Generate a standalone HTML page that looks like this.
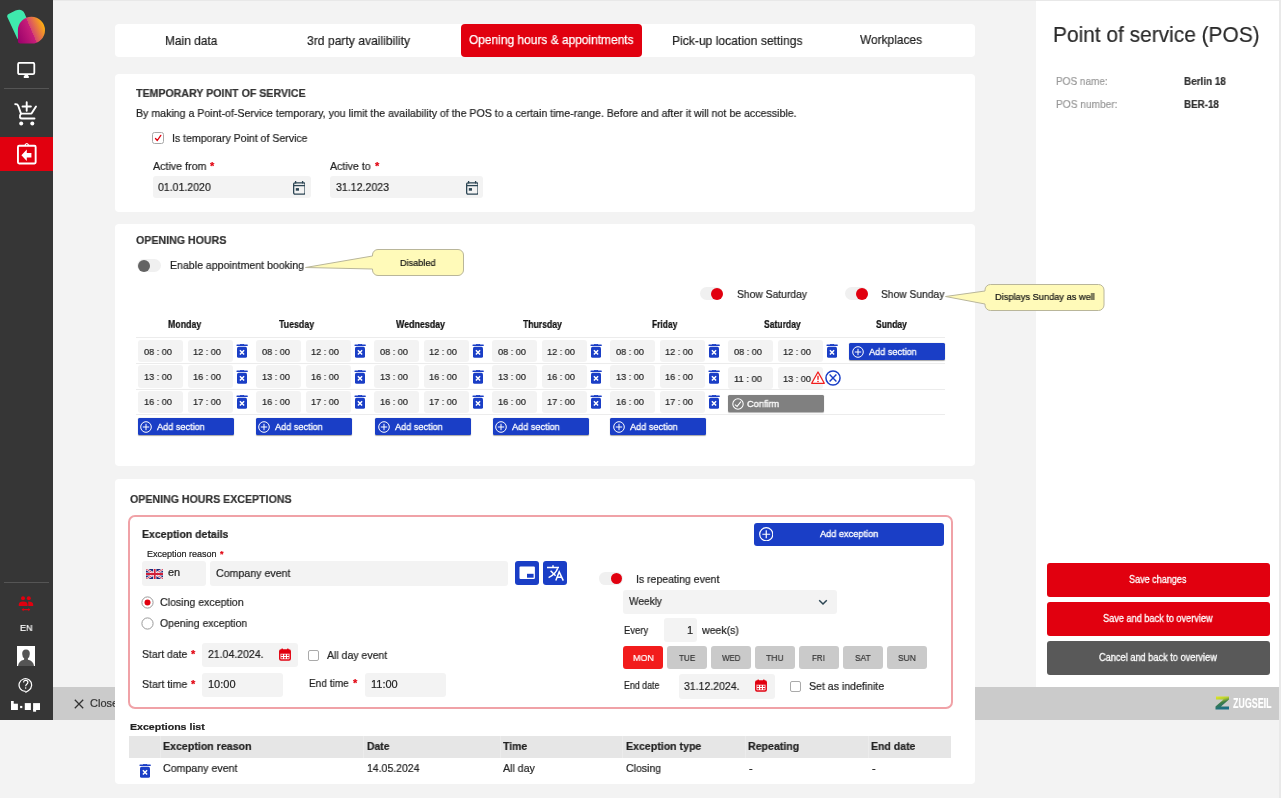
<!DOCTYPE html>
<html><head><meta charset="utf-8"><style>
html,body{margin:0;padding:0;width:1281px;height:798px;overflow:hidden;background:#f3f3f3;}
body{position:relative;font-family:"Liberation Sans",sans-serif;}
.t{position:absolute;white-space:nowrap;line-height:1;will-change:transform;-webkit-text-stroke:0.2px currentColor;}
.r{position:absolute;display:block;}
</style></head><body>
<div class="r" style="left:0px;top:0px;width:1281px;height:798px;background:#f3f3f3;border-radius:0px;"></div>
<div class="r" style="left:53px;top:0px;width:1228px;height:1px;background:#e8e8e8;border-radius:0px;"></div>
<div class="r" style="left:0px;top:0px;width:53px;height:720px;background:#363636;border-radius:0px;"></div>
<div class="r" style="left:0px;top:137px;width:53px;height:34px;background:#e1000f;border-radius:0px;"></div>
<div class="r" style="left:4px;top:88px;width:45px;height:1px;background:#555;border-radius:0px;"></div>
<div class="r" style="left:4px;top:582px;width:45px;height:1px;background:#555;border-radius:0px;"></div>
<div class="r" style="left:53px;top:687px;width:1228px;height:33px;background:#cbcbcb;border-radius:0px;"></div>
<svg class="r" style="left:73.7px;top:698.7px;" width="10" height="10" viewBox="0 0 10 10"><path d="M0.8 0.8 L9.2 9.2 M9.2 0.8 L0.8 9.2" stroke="#333" stroke-width="1.3"/></svg>
<div class="t" style="left:90.30px;top:698.00px;font-size:11px;color:#333;">Close</div>
<svg class="r" style="left:1215px;top:696px;" width="15" height="14" viewBox="0 0 15 14"><defs><linearGradient id="zg" x1="0" y1="0" x2="0.3" y2="1"><stop offset="0" stop-color="#e6ea22"/><stop offset="0.3" stop-color="#b8d030"/><stop offset="0.55" stop-color="#3f7d46"/><stop offset="1" stop-color="#1a6e84"/></linearGradient></defs><path d="M1 0.5 H14 V3.5 L6 10.5 H14 V13.5 H0.5 V10.5 L8.5 3.5 H1 Z" fill="url(#zg)"/></svg>
<div class="t" style="left:1233.00px;top:696.00px;font-size:14px;color:#fff;font-weight:bold;transform:scaleX(0.6359);transform-origin:0.00px 0;">ZUGSEIL</div>
<div class="r" style="left:1036px;top:1px;width:243px;height:686px;background:#ffffff;border-radius:0px;"></div>
<div class="r" style="left:1279px;top:0px;width:2px;height:798px;background:#e9e9e9;border-radius:0px;"></div>
<div class="r" style="left:115px;top:24px;width:860px;height:33px;background:#fff;border-radius:4px;"></div>
<div class="r" style="left:115px;top:74px;width:860px;height:138px;background:#fff;border-radius:4px;"></div>
<div class="r" style="left:115px;top:224px;width:860px;height:242px;background:#fff;border-radius:4px;"></div>
<div class="r" style="left:115px;top:479px;width:860px;height:305px;background:#fff;border-radius:4px;"></div>
<div class="r" style="left:461px;top:24px;width:181px;height:33px;background:#e1000f;border-radius:4px;"></div>
<div class="t" style="left:165.00px;top:34.00px;font-size:13px;color:#222;transform:scaleX(0.9178);transform-origin:0.00px 0;">Main data</div>
<div class="t" style="left:306.50px;top:34.00px;font-size:13px;color:#222;transform:scaleX(0.9321);transform-origin:0.00px 0;">3rd party availibility</div>
<div class="t" style="left:468.50px;top:33.00px;font-size:13px;color:#fff;transform:scaleX(0.9180);transform-origin:0.00px 0;-webkit-text-stroke:0.25px #fff;">Opening hours &amp; appointments</div>
<div class="t" style="left:672.00px;top:34.00px;font-size:13px;color:#222;transform:scaleX(0.9308);transform-origin:0.00px 0;">Pick-up location settings</div>
<div class="t" style="left:859.70px;top:33.00px;font-size:13px;color:#222;transform:scaleX(0.9158);transform-origin:0.00px 0;">Workplaces</div>
<div class="t" style="left:136.40px;top:88.00px;font-size:11px;color:#333;font-weight:bold;transform:scaleX(0.9647);transform-origin:0.00px 0;">TEMPORARY POINT OF SERVICE</div>
<div class="t" style="left:136.40px;top:108.00px;font-size:11px;color:#222;transform:scaleX(0.9641);transform-origin:0.00px 0;">By making a Point-of-Service temporary, you limit the availability of the POS to a certain time-range. Before and after it will not be accessible.</div>
<div class="r" style="left:152px;top:132px;width:12px;height:12px;background:#fff;border-radius:2.5px;border:1px solid #a8a8a8;box-sizing:border-box;"></div>
<svg class="r" style="left:152px;top:132px;" width="12" height="12" viewBox="0 0 12 12"><path d="M3.5 6.5 L5.3 8.5 L8.8 3.4" fill="none" stroke="#e1000f" stroke-width="1.3" stroke-linecap="round" stroke-linejoin="round"/></svg>
<div class="t" style="left:171.50px;top:133.00px;font-size:11px;color:#222;transform:scaleX(0.9596);transform-origin:0.00px 0;">Is temporary Point of Service</div>
<div class="t" style="left:153.20px;top:161.00px;font-size:11px;color:#222;transform:scaleX(0.9727);transform-origin:0.00px 0;">Active from</div>
<div class="t" style="left:210.30px;top:161.00px;font-size:11px;color:#e1000f;font-weight:bold;">*</div>
<div class="r" style="left:153px;top:176px;width:158px;height:22px;background:#f3f3f3;border-radius:3px;"></div>
<div class="t" style="left:158.30px;top:182.00px;font-size:11px;color:#222;transform:scaleX(0.9583);transform-origin:0.00px 0;">01.01.2020</div>
<div class="t" style="left:330.30px;top:161.00px;font-size:11px;color:#222;transform:scaleX(0.9645);transform-origin:0.00px 0;">Active to</div>
<div class="t" style="left:374.70px;top:161.00px;font-size:11px;color:#e1000f;font-weight:bold;">*</div>
<div class="r" style="left:330px;top:176px;width:153px;height:22px;background:#f3f3f3;border-radius:3px;"></div>
<div class="t" style="left:335.60px;top:182.00px;font-size:11px;color:#222;transform:scaleX(0.9637);transform-origin:0.00px 0;">31.12.2023</div>
<svg class="r" style="left:293px;top:181px;" width="12" height="14" viewBox="0 0 12 14"><rect x="0.65" y="1.95" width="11.4" height="11.2" rx="1.3" fill="none" stroke="#2d4654" stroke-width="1.3"/><path d="M0.65 4.6 H12.05" stroke="#2d4654" stroke-width="1.3"/><path d="M2.6 0 V2.6 M9.6 0 V2.6" stroke="#2d4654" stroke-width="1.3"/><rect x="2.8" y="7.1" width="3.2" height="2.6" fill="#2d4654"/></svg>
<svg class="r" style="left:466px;top:181px;" width="12" height="14" viewBox="0 0 12 14"><rect x="0.65" y="1.95" width="11.4" height="11.2" rx="1.3" fill="none" stroke="#2d4654" stroke-width="1.3"/><path d="M0.65 4.6 H12.05" stroke="#2d4654" stroke-width="1.3"/><path d="M2.6 0 V2.6 M9.6 0 V2.6" stroke="#2d4654" stroke-width="1.3"/><rect x="2.8" y="7.1" width="3.2" height="2.6" fill="#2d4654"/></svg>
<div class="t" style="left:136.30px;top:235.00px;font-size:11px;color:#333;font-weight:bold;transform:scaleX(0.9658);transform-origin:0.00px 0;">OPENING HOURS</div>
<div class="r" style="left:137px;top:259px;width:24px;height:13px;background:#f0f0f0;border-radius:6.5px;"></div>
<div class="r" style="left:137.5px;top:259.5px;width:12.5px;height:12.5px;background:#636363;border-radius:6.25px;"></div>
<div class="t" style="left:169.80px;top:260.00px;font-size:11px;color:#222;transform:scaleX(0.9613);transform-origin:0.00px 0;">Enable appointment booking</div>
<svg class="r" style="left:304.5px;top:249px;" width="160.0" height="28" viewBox="0 0 160.0 28"><path d="M73.0 0.5 H153.0 A5.5 5.5 0 0 1 158.5 6 V21 A5.5 5.5 0 0 1 153.0 26.5 H73.0 A5.5 5.5 0 0 1 67.5 21 V20 L0.5 18.5 L67.5 7 V6 A5.5 5.5 0 0 1 73.0 0.5 Z" fill="#fffab9" stroke="#b9b69a" stroke-width="1"/></svg>
<div class="t" style="left:399.50px;top:258.00px;font-size:9.5px;color:#111;transform:scaleX(0.9595);transform-origin:0.00px 0;">Disabled</div>
<div class="r" style="left:700px;top:287px;width:23px;height:13px;background:#f0f0f0;border-radius:6.5px;"></div>
<div class="r" style="left:711px;top:288px;width:12px;height:12px;background:#e1000f;border-radius:6px;"></div>
<div class="t" style="left:736.60px;top:289.00px;font-size:11px;color:#222;transform:scaleX(0.9383);transform-origin:0.00px 0;">Show Saturday</div>
<div class="r" style="left:845px;top:287px;width:23px;height:13px;background:#f0f0f0;border-radius:6.5px;"></div>
<div class="r" style="left:856px;top:288px;width:12px;height:12px;background:#e1000f;border-radius:6px;"></div>
<div class="t" style="left:881.30px;top:289.00px;font-size:11px;color:#222;transform:scaleX(0.9323);transform-origin:0.00px 0;">Show Sunday</div>
<svg class="r" style="left:945px;top:283.5px;" width="160.5" height="28" viewBox="0 0 160.5 28"><path d="M45.5 0.5 H153.5 A5.5 5.5 0 0 1 159.0 6 V21 A5.5 5.5 0 0 1 153.5 26.5 H45.5 A5.5 5.5 0 0 1 40.0 21 V20.0 L0.5 12.5 L40.0 7.0 V6 A5.5 5.5 0 0 1 45.5 0.5 Z" fill="#fffab9" stroke="#b9b69a" stroke-width="1"/></svg>
<div class="t" style="left:994.80px;top:292.00px;font-size:9.5px;color:#111;transform:scaleX(0.9746);transform-origin:0.00px 0;">Displays Sunday as well</div>
<div class="t" style="left:168.40px;top:320.00px;font-size:10px;color:#111;font-weight:bold;transform:scaleX(0.8783);transform-origin:0.00px 0;">Monday</div>
<div class="t" style="left:279.30px;top:320.00px;font-size:10px;color:#111;font-weight:bold;transform:scaleX(0.8822);transform-origin:0.00px 0;">Tuesday</div>
<div class="t" style="left:396.00px;top:320.00px;font-size:10px;color:#111;font-weight:bold;transform:scaleX(0.8845);transform-origin:0.00px 0;">Wednesday</div>
<div class="t" style="left:522.50px;top:320.00px;font-size:10px;color:#111;font-weight:bold;transform:scaleX(0.8622);transform-origin:0.00px 0;">Thursday</div>
<div class="t" style="left:651.50px;top:320.00px;font-size:10px;color:#111;font-weight:bold;transform:scaleX(0.8433);transform-origin:0.00px 0;">Friday</div>
<div class="t" style="left:764.40px;top:320.00px;font-size:10px;color:#111;font-weight:bold;transform:scaleX(0.8575);transform-origin:0.00px 0;">Saturday</div>
<div class="t" style="left:876.40px;top:320.00px;font-size:10px;color:#111;font-weight:bold;transform:scaleX(0.8536);transform-origin:0.00px 0;">Sunday</div>
<div class="r" style="left:136px;top:337px;width:809px;height:1px;background:#ececec;border-radius:0px;"></div>
<div class="r" style="left:136px;top:363px;width:809px;height:1px;background:#ececec;border-radius:0px;"></div>
<div class="r" style="left:136px;top:389px;width:809px;height:1px;background:#ececec;border-radius:0px;"></div>
<div class="r" style="left:136px;top:414px;width:809px;height:1px;background:#ececec;border-radius:0px;"></div>
<div class="r" style="left:138px;top:339.6px;width:45px;height:22.3px;background:#f3f3f3;border-radius:3px;"></div>
<div class="r" style="left:187.5px;top:339.6px;width:45px;height:22.3px;background:#f3f3f3;border-radius:3px;"></div>
<div class="t" style="left:143.70px;top:347.00px;font-size:9.5px;color:#222;transform:scaleX(0.9621);transform-origin:0.00px 0;">08 : 00</div>
<div class="t" style="left:193.20px;top:347.00px;font-size:9.5px;color:#222;transform:scaleX(0.9621);transform-origin:0.00px 0;">12 : 00</div>
<svg class="r" style="left:236px;top:344.1px;" width="12" height="15" viewBox="0 0 12 15"><path d="M1.1 1.3 H11.2" stroke="#1a3ec6" stroke-width="1.4" stroke-linecap="round"/><path d="M4.1 0.5 Q6.1 -0.3 8.1 0.5" stroke="#1a3ec6" stroke-width="1.1" fill="none"/><rect x="1.0" y="2.8" width="10" height="11" rx="1.6" fill="#1a3ec6"/><path d="M3.9 6.3 L8.1 10.6 M8.1 6.3 L3.9 10.6" stroke="#fff" stroke-width="1.5"/></svg>
<div class="r" style="left:138px;top:365.3px;width:45px;height:22.3px;background:#f3f3f3;border-radius:3px;"></div>
<div class="r" style="left:187.5px;top:365.3px;width:45px;height:22.3px;background:#f3f3f3;border-radius:3px;"></div>
<div class="t" style="left:143.70px;top:372.00px;font-size:9.5px;color:#222;transform:scaleX(0.9621);transform-origin:0.00px 0;">13 : 00</div>
<div class="t" style="left:193.20px;top:372.00px;font-size:9.5px;color:#222;transform:scaleX(0.9621);transform-origin:0.00px 0;">16 : 00</div>
<svg class="r" style="left:236px;top:369.8px;" width="12" height="15" viewBox="0 0 12 15"><path d="M1.1 1.3 H11.2" stroke="#1a3ec6" stroke-width="1.4" stroke-linecap="round"/><path d="M4.1 0.5 Q6.1 -0.3 8.1 0.5" stroke="#1a3ec6" stroke-width="1.1" fill="none"/><rect x="1.0" y="2.8" width="10" height="11" rx="1.6" fill="#1a3ec6"/><path d="M3.9 6.3 L8.1 10.6 M8.1 6.3 L3.9 10.6" stroke="#fff" stroke-width="1.5"/></svg>
<div class="r" style="left:138px;top:390.6px;width:45px;height:22.3px;background:#f3f3f3;border-radius:3px;"></div>
<div class="r" style="left:187.5px;top:390.6px;width:45px;height:22.3px;background:#f3f3f3;border-radius:3px;"></div>
<div class="t" style="left:143.70px;top:397.00px;font-size:9.5px;color:#222;transform:scaleX(0.9621);transform-origin:0.00px 0;">16 : 00</div>
<div class="t" style="left:193.20px;top:397.00px;font-size:9.5px;color:#222;transform:scaleX(0.9621);transform-origin:0.00px 0;">17 : 00</div>
<svg class="r" style="left:236px;top:395.1px;" width="12" height="15" viewBox="0 0 12 15"><path d="M1.1 1.3 H11.2" stroke="#1a3ec6" stroke-width="1.4" stroke-linecap="round"/><path d="M4.1 0.5 Q6.1 -0.3 8.1 0.5" stroke="#1a3ec6" stroke-width="1.1" fill="none"/><rect x="1.0" y="2.8" width="10" height="11" rx="1.6" fill="#1a3ec6"/><path d="M3.9 6.3 L8.1 10.6 M8.1 6.3 L3.9 10.6" stroke="#fff" stroke-width="1.5"/></svg>
<div class="r" style="left:138px;top:418.3px;width:96px;height:16.5px;background:#1a3ec6;border-radius:1.5px;box-shadow:0 0.5px 1px rgba(0,0,0,.35);"></div>
<svg class="r" style="left:140.2px;top:420.6px;" width="12" height="12" viewBox="0 0 12 12"><circle cx="6.0" cy="6.0" r="5.3" fill="none" stroke="#fff" stroke-width="1.0"/><path d="M6.0 2.81 V9.190000000000001 M2.81 6.0 H9.190000000000001" stroke="#fff" stroke-width="1.0"/></svg>
<div class="t" style="left:157.20px;top:422.00px;font-size:9.5px;color:#fff;transform:scaleX(0.9637);transform-origin:0.00px 0;-webkit-text-stroke:0.3px #fff;">Add section</div>
<div class="r" style="left:256px;top:339.6px;width:45px;height:22.3px;background:#f3f3f3;border-radius:3px;"></div>
<div class="r" style="left:305.5px;top:339.6px;width:45px;height:22.3px;background:#f3f3f3;border-radius:3px;"></div>
<div class="t" style="left:261.70px;top:347.00px;font-size:9.5px;color:#222;transform:scaleX(0.9621);transform-origin:0.00px 0;">08 : 00</div>
<div class="t" style="left:311.20px;top:347.00px;font-size:9.5px;color:#222;transform:scaleX(0.9621);transform-origin:0.00px 0;">12 : 00</div>
<svg class="r" style="left:354px;top:344.1px;" width="12" height="15" viewBox="0 0 12 15"><path d="M1.1 1.3 H11.2" stroke="#1a3ec6" stroke-width="1.4" stroke-linecap="round"/><path d="M4.1 0.5 Q6.1 -0.3 8.1 0.5" stroke="#1a3ec6" stroke-width="1.1" fill="none"/><rect x="1.0" y="2.8" width="10" height="11" rx="1.6" fill="#1a3ec6"/><path d="M3.9 6.3 L8.1 10.6 M8.1 6.3 L3.9 10.6" stroke="#fff" stroke-width="1.5"/></svg>
<div class="r" style="left:256px;top:365.3px;width:45px;height:22.3px;background:#f3f3f3;border-radius:3px;"></div>
<div class="r" style="left:305.5px;top:365.3px;width:45px;height:22.3px;background:#f3f3f3;border-radius:3px;"></div>
<div class="t" style="left:261.70px;top:372.00px;font-size:9.5px;color:#222;transform:scaleX(0.9621);transform-origin:0.00px 0;">13 : 00</div>
<div class="t" style="left:311.20px;top:372.00px;font-size:9.5px;color:#222;transform:scaleX(0.9621);transform-origin:0.00px 0;">16 : 00</div>
<svg class="r" style="left:354px;top:369.8px;" width="12" height="15" viewBox="0 0 12 15"><path d="M1.1 1.3 H11.2" stroke="#1a3ec6" stroke-width="1.4" stroke-linecap="round"/><path d="M4.1 0.5 Q6.1 -0.3 8.1 0.5" stroke="#1a3ec6" stroke-width="1.1" fill="none"/><rect x="1.0" y="2.8" width="10" height="11" rx="1.6" fill="#1a3ec6"/><path d="M3.9 6.3 L8.1 10.6 M8.1 6.3 L3.9 10.6" stroke="#fff" stroke-width="1.5"/></svg>
<div class="r" style="left:256px;top:390.6px;width:45px;height:22.3px;background:#f3f3f3;border-radius:3px;"></div>
<div class="r" style="left:305.5px;top:390.6px;width:45px;height:22.3px;background:#f3f3f3;border-radius:3px;"></div>
<div class="t" style="left:261.70px;top:397.00px;font-size:9.5px;color:#222;transform:scaleX(0.9621);transform-origin:0.00px 0;">16 : 00</div>
<div class="t" style="left:311.20px;top:397.00px;font-size:9.5px;color:#222;transform:scaleX(0.9621);transform-origin:0.00px 0;">17 : 00</div>
<svg class="r" style="left:354px;top:395.1px;" width="12" height="15" viewBox="0 0 12 15"><path d="M1.1 1.3 H11.2" stroke="#1a3ec6" stroke-width="1.4" stroke-linecap="round"/><path d="M4.1 0.5 Q6.1 -0.3 8.1 0.5" stroke="#1a3ec6" stroke-width="1.1" fill="none"/><rect x="1.0" y="2.8" width="10" height="11" rx="1.6" fill="#1a3ec6"/><path d="M3.9 6.3 L8.1 10.6 M8.1 6.3 L3.9 10.6" stroke="#fff" stroke-width="1.5"/></svg>
<div class="r" style="left:256px;top:418.3px;width:96px;height:16.5px;background:#1a3ec6;border-radius:1.5px;box-shadow:0 0.5px 1px rgba(0,0,0,.35);"></div>
<svg class="r" style="left:258.2px;top:420.6px;" width="12" height="12" viewBox="0 0 12 12"><circle cx="6.0" cy="6.0" r="5.3" fill="none" stroke="#fff" stroke-width="1.0"/><path d="M6.0 2.81 V9.190000000000001 M2.81 6.0 H9.190000000000001" stroke="#fff" stroke-width="1.0"/></svg>
<div class="t" style="left:275.20px;top:422.00px;font-size:9.5px;color:#fff;transform:scaleX(0.9637);transform-origin:0.00px 0;-webkit-text-stroke:0.3px #fff;">Add section</div>
<div class="r" style="left:374px;top:339.6px;width:45px;height:22.3px;background:#f3f3f3;border-radius:3px;"></div>
<div class="r" style="left:423.5px;top:339.6px;width:45px;height:22.3px;background:#f3f3f3;border-radius:3px;"></div>
<div class="t" style="left:379.70px;top:347.00px;font-size:9.5px;color:#222;transform:scaleX(0.9621);transform-origin:0.00px 0;">08 : 00</div>
<div class="t" style="left:429.20px;top:347.00px;font-size:9.5px;color:#222;transform:scaleX(0.9621);transform-origin:0.00px 0;">12 : 00</div>
<svg class="r" style="left:472px;top:344.1px;" width="12" height="15" viewBox="0 0 12 15"><path d="M1.1 1.3 H11.2" stroke="#1a3ec6" stroke-width="1.4" stroke-linecap="round"/><path d="M4.1 0.5 Q6.1 -0.3 8.1 0.5" stroke="#1a3ec6" stroke-width="1.1" fill="none"/><rect x="1.0" y="2.8" width="10" height="11" rx="1.6" fill="#1a3ec6"/><path d="M3.9 6.3 L8.1 10.6 M8.1 6.3 L3.9 10.6" stroke="#fff" stroke-width="1.5"/></svg>
<div class="r" style="left:374px;top:365.3px;width:45px;height:22.3px;background:#f3f3f3;border-radius:3px;"></div>
<div class="r" style="left:423.5px;top:365.3px;width:45px;height:22.3px;background:#f3f3f3;border-radius:3px;"></div>
<div class="t" style="left:379.70px;top:372.00px;font-size:9.5px;color:#222;transform:scaleX(0.9621);transform-origin:0.00px 0;">13 : 00</div>
<div class="t" style="left:429.20px;top:372.00px;font-size:9.5px;color:#222;transform:scaleX(0.9621);transform-origin:0.00px 0;">16 : 00</div>
<svg class="r" style="left:472px;top:369.8px;" width="12" height="15" viewBox="0 0 12 15"><path d="M1.1 1.3 H11.2" stroke="#1a3ec6" stroke-width="1.4" stroke-linecap="round"/><path d="M4.1 0.5 Q6.1 -0.3 8.1 0.5" stroke="#1a3ec6" stroke-width="1.1" fill="none"/><rect x="1.0" y="2.8" width="10" height="11" rx="1.6" fill="#1a3ec6"/><path d="M3.9 6.3 L8.1 10.6 M8.1 6.3 L3.9 10.6" stroke="#fff" stroke-width="1.5"/></svg>
<div class="r" style="left:374px;top:390.6px;width:45px;height:22.3px;background:#f3f3f3;border-radius:3px;"></div>
<div class="r" style="left:423.5px;top:390.6px;width:45px;height:22.3px;background:#f3f3f3;border-radius:3px;"></div>
<div class="t" style="left:379.70px;top:397.00px;font-size:9.5px;color:#222;transform:scaleX(0.9621);transform-origin:0.00px 0;">16 : 00</div>
<div class="t" style="left:429.20px;top:397.00px;font-size:9.5px;color:#222;transform:scaleX(0.9621);transform-origin:0.00px 0;">17 : 00</div>
<svg class="r" style="left:472px;top:395.1px;" width="12" height="15" viewBox="0 0 12 15"><path d="M1.1 1.3 H11.2" stroke="#1a3ec6" stroke-width="1.4" stroke-linecap="round"/><path d="M4.1 0.5 Q6.1 -0.3 8.1 0.5" stroke="#1a3ec6" stroke-width="1.1" fill="none"/><rect x="1.0" y="2.8" width="10" height="11" rx="1.6" fill="#1a3ec6"/><path d="M3.9 6.3 L8.1 10.6 M8.1 6.3 L3.9 10.6" stroke="#fff" stroke-width="1.5"/></svg>
<div class="r" style="left:375.4px;top:418.3px;width:96px;height:16.5px;background:#1a3ec6;border-radius:1.5px;box-shadow:0 0.5px 1px rgba(0,0,0,.35);"></div>
<svg class="r" style="left:377.59999999999997px;top:420.6px;" width="12" height="12" viewBox="0 0 12 12"><circle cx="6.0" cy="6.0" r="5.3" fill="none" stroke="#fff" stroke-width="1.0"/><path d="M6.0 2.81 V9.190000000000001 M2.81 6.0 H9.190000000000001" stroke="#fff" stroke-width="1.0"/></svg>
<div class="t" style="left:394.60px;top:422.00px;font-size:9.5px;color:#fff;transform:scaleX(0.9637);transform-origin:0.00px 0;-webkit-text-stroke:0.3px #fff;">Add section</div>
<div class="r" style="left:492px;top:339.6px;width:45px;height:22.3px;background:#f3f3f3;border-radius:3px;"></div>
<div class="r" style="left:541.5px;top:339.6px;width:45px;height:22.3px;background:#f3f3f3;border-radius:3px;"></div>
<div class="t" style="left:497.70px;top:347.00px;font-size:9.5px;color:#222;transform:scaleX(0.9621);transform-origin:0.00px 0;">08 : 00</div>
<div class="t" style="left:547.20px;top:347.00px;font-size:9.5px;color:#222;transform:scaleX(0.9621);transform-origin:0.00px 0;">12 : 00</div>
<svg class="r" style="left:590px;top:344.1px;" width="12" height="15" viewBox="0 0 12 15"><path d="M1.1 1.3 H11.2" stroke="#1a3ec6" stroke-width="1.4" stroke-linecap="round"/><path d="M4.1 0.5 Q6.1 -0.3 8.1 0.5" stroke="#1a3ec6" stroke-width="1.1" fill="none"/><rect x="1.0" y="2.8" width="10" height="11" rx="1.6" fill="#1a3ec6"/><path d="M3.9 6.3 L8.1 10.6 M8.1 6.3 L3.9 10.6" stroke="#fff" stroke-width="1.5"/></svg>
<div class="r" style="left:492px;top:365.3px;width:45px;height:22.3px;background:#f3f3f3;border-radius:3px;"></div>
<div class="r" style="left:541.5px;top:365.3px;width:45px;height:22.3px;background:#f3f3f3;border-radius:3px;"></div>
<div class="t" style="left:497.70px;top:372.00px;font-size:9.5px;color:#222;transform:scaleX(0.9621);transform-origin:0.00px 0;">13 : 00</div>
<div class="t" style="left:547.20px;top:372.00px;font-size:9.5px;color:#222;transform:scaleX(0.9621);transform-origin:0.00px 0;">16 : 00</div>
<svg class="r" style="left:590px;top:369.8px;" width="12" height="15" viewBox="0 0 12 15"><path d="M1.1 1.3 H11.2" stroke="#1a3ec6" stroke-width="1.4" stroke-linecap="round"/><path d="M4.1 0.5 Q6.1 -0.3 8.1 0.5" stroke="#1a3ec6" stroke-width="1.1" fill="none"/><rect x="1.0" y="2.8" width="10" height="11" rx="1.6" fill="#1a3ec6"/><path d="M3.9 6.3 L8.1 10.6 M8.1 6.3 L3.9 10.6" stroke="#fff" stroke-width="1.5"/></svg>
<div class="r" style="left:492px;top:390.6px;width:45px;height:22.3px;background:#f3f3f3;border-radius:3px;"></div>
<div class="r" style="left:541.5px;top:390.6px;width:45px;height:22.3px;background:#f3f3f3;border-radius:3px;"></div>
<div class="t" style="left:497.70px;top:397.00px;font-size:9.5px;color:#222;transform:scaleX(0.9621);transform-origin:0.00px 0;">16 : 00</div>
<div class="t" style="left:547.20px;top:397.00px;font-size:9.5px;color:#222;transform:scaleX(0.9621);transform-origin:0.00px 0;">17 : 00</div>
<svg class="r" style="left:590px;top:395.1px;" width="12" height="15" viewBox="0 0 12 15"><path d="M1.1 1.3 H11.2" stroke="#1a3ec6" stroke-width="1.4" stroke-linecap="round"/><path d="M4.1 0.5 Q6.1 -0.3 8.1 0.5" stroke="#1a3ec6" stroke-width="1.1" fill="none"/><rect x="1.0" y="2.8" width="10" height="11" rx="1.6" fill="#1a3ec6"/><path d="M3.9 6.3 L8.1 10.6 M8.1 6.3 L3.9 10.6" stroke="#fff" stroke-width="1.5"/></svg>
<div class="r" style="left:492.6px;top:418.3px;width:96px;height:16.5px;background:#1a3ec6;border-radius:1.5px;box-shadow:0 0.5px 1px rgba(0,0,0,.35);"></div>
<svg class="r" style="left:494.8px;top:420.6px;" width="12" height="12" viewBox="0 0 12 12"><circle cx="6.0" cy="6.0" r="5.3" fill="none" stroke="#fff" stroke-width="1.0"/><path d="M6.0 2.81 V9.190000000000001 M2.81 6.0 H9.190000000000001" stroke="#fff" stroke-width="1.0"/></svg>
<div class="t" style="left:511.80px;top:422.00px;font-size:9.5px;color:#fff;transform:scaleX(0.9637);transform-origin:0.00px 0;-webkit-text-stroke:0.3px #fff;">Add section</div>
<div class="r" style="left:610px;top:339.6px;width:45px;height:22.3px;background:#f3f3f3;border-radius:3px;"></div>
<div class="r" style="left:659.5px;top:339.6px;width:45px;height:22.3px;background:#f3f3f3;border-radius:3px;"></div>
<div class="t" style="left:615.70px;top:347.00px;font-size:9.5px;color:#222;transform:scaleX(0.9621);transform-origin:0.00px 0;">08 : 00</div>
<div class="t" style="left:665.20px;top:347.00px;font-size:9.5px;color:#222;transform:scaleX(0.9621);transform-origin:0.00px 0;">12 : 00</div>
<svg class="r" style="left:708px;top:344.1px;" width="12" height="15" viewBox="0 0 12 15"><path d="M1.1 1.3 H11.2" stroke="#1a3ec6" stroke-width="1.4" stroke-linecap="round"/><path d="M4.1 0.5 Q6.1 -0.3 8.1 0.5" stroke="#1a3ec6" stroke-width="1.1" fill="none"/><rect x="1.0" y="2.8" width="10" height="11" rx="1.6" fill="#1a3ec6"/><path d="M3.9 6.3 L8.1 10.6 M8.1 6.3 L3.9 10.6" stroke="#fff" stroke-width="1.5"/></svg>
<div class="r" style="left:610px;top:365.3px;width:45px;height:22.3px;background:#f3f3f3;border-radius:3px;"></div>
<div class="r" style="left:659.5px;top:365.3px;width:45px;height:22.3px;background:#f3f3f3;border-radius:3px;"></div>
<div class="t" style="left:615.70px;top:372.00px;font-size:9.5px;color:#222;transform:scaleX(0.9621);transform-origin:0.00px 0;">13 : 00</div>
<div class="t" style="left:665.20px;top:372.00px;font-size:9.5px;color:#222;transform:scaleX(0.9621);transform-origin:0.00px 0;">16 : 00</div>
<svg class="r" style="left:708px;top:369.8px;" width="12" height="15" viewBox="0 0 12 15"><path d="M1.1 1.3 H11.2" stroke="#1a3ec6" stroke-width="1.4" stroke-linecap="round"/><path d="M4.1 0.5 Q6.1 -0.3 8.1 0.5" stroke="#1a3ec6" stroke-width="1.1" fill="none"/><rect x="1.0" y="2.8" width="10" height="11" rx="1.6" fill="#1a3ec6"/><path d="M3.9 6.3 L8.1 10.6 M8.1 6.3 L3.9 10.6" stroke="#fff" stroke-width="1.5"/></svg>
<div class="r" style="left:610px;top:390.6px;width:45px;height:22.3px;background:#f3f3f3;border-radius:3px;"></div>
<div class="r" style="left:659.5px;top:390.6px;width:45px;height:22.3px;background:#f3f3f3;border-radius:3px;"></div>
<div class="t" style="left:615.70px;top:397.00px;font-size:9.5px;color:#222;transform:scaleX(0.9621);transform-origin:0.00px 0;">16 : 00</div>
<div class="t" style="left:665.20px;top:397.00px;font-size:9.5px;color:#222;transform:scaleX(0.9621);transform-origin:0.00px 0;">17 : 00</div>
<svg class="r" style="left:708px;top:395.1px;" width="12" height="15" viewBox="0 0 12 15"><path d="M1.1 1.3 H11.2" stroke="#1a3ec6" stroke-width="1.4" stroke-linecap="round"/><path d="M4.1 0.5 Q6.1 -0.3 8.1 0.5" stroke="#1a3ec6" stroke-width="1.1" fill="none"/><rect x="1.0" y="2.8" width="10" height="11" rx="1.6" fill="#1a3ec6"/><path d="M3.9 6.3 L8.1 10.6 M8.1 6.3 L3.9 10.6" stroke="#fff" stroke-width="1.5"/></svg>
<div class="r" style="left:610.4px;top:418.3px;width:96px;height:16.5px;background:#1a3ec6;border-radius:1.5px;box-shadow:0 0.5px 1px rgba(0,0,0,.35);"></div>
<svg class="r" style="left:612.6px;top:420.6px;" width="12" height="12" viewBox="0 0 12 12"><circle cx="6.0" cy="6.0" r="5.3" fill="none" stroke="#fff" stroke-width="1.0"/><path d="M6.0 2.81 V9.190000000000001 M2.81 6.0 H9.190000000000001" stroke="#fff" stroke-width="1.0"/></svg>
<div class="t" style="left:629.60px;top:422.00px;font-size:9.5px;color:#fff;transform:scaleX(0.9637);transform-origin:0.00px 0;-webkit-text-stroke:0.3px #fff;">Add section</div>
<div class="r" style="left:728px;top:339.6px;width:45px;height:22.3px;background:#f3f3f3;border-radius:3px;"></div>
<div class="r" style="left:777.5px;top:339.6px;width:45px;height:22.3px;background:#f3f3f3;border-radius:3px;"></div>
<div class="t" style="left:733.70px;top:347.00px;font-size:9.5px;color:#222;transform:scaleX(0.9621);transform-origin:0.00px 0;">08 : 00</div>
<div class="t" style="left:783.20px;top:347.00px;font-size:9.5px;color:#222;transform:scaleX(0.9621);transform-origin:0.00px 0;">12 : 00</div>
<svg class="r" style="left:826px;top:344.1px;" width="12" height="15" viewBox="0 0 12 15"><path d="M1.1 1.3 H11.2" stroke="#1a3ec6" stroke-width="1.4" stroke-linecap="round"/><path d="M4.1 0.5 Q6.1 -0.3 8.1 0.5" stroke="#1a3ec6" stroke-width="1.1" fill="none"/><rect x="1.0" y="2.8" width="10" height="11" rx="1.6" fill="#1a3ec6"/><path d="M3.9 6.3 L8.1 10.6 M8.1 6.3 L3.9 10.6" stroke="#fff" stroke-width="1.5"/></svg>
<div class="r" style="left:728px;top:367px;width:45px;height:21.7px;background:#f3f3f3;border-radius:3px;"></div>
<div class="r" style="left:777.5px;top:367px;width:45px;height:21.7px;background:#f3f3f3;border-radius:3px;"></div>
<div class="t" style="left:733.70px;top:374.00px;font-size:9.5px;color:#222;transform:scaleX(0.9859);transform-origin:0.00px 0;">11 : 00</div>
<div class="t" style="left:783.20px;top:374.00px;font-size:9.5px;color:#222;transform:scaleX(0.9621);transform-origin:0.00px 0;">13 : 00</div>
<svg class="r" style="left:810.5px;top:371.3px;" width="14" height="13" viewBox="0 0 14 13"><path d="M7 1 L13.3 12.3 H0.7 Z" fill="#fff" stroke="#f01e1e" stroke-width="1.3" stroke-linejoin="round"/><path d="M7 4.8 V8.8" stroke="#f01e1e" stroke-width="1.4"/><circle cx="7" cy="10.5" r="0.8" fill="#f01e1e"/></svg>
<svg class="r" style="left:824.5px;top:370px;" width="16" height="16" viewBox="0 0 16 16"><circle cx="8" cy="8" r="7.05" fill="none" stroke="#1a3ec6" stroke-width="1.5"/><path d="M4.6 4.6 L11.4 11.4 M11.4 4.6 L4.6 11.4" stroke="#1a3ec6" stroke-width="1.4"/></svg>
<div class="r" style="left:728px;top:395.2px;width:96px;height:16.5px;background:#808080;border-radius:1.5px;box-shadow:0 0.5px 1px rgba(0,0,0,.3);"></div>
<svg class="r" style="left:732px;top:397.5px;" width="12" height="12" viewBox="0 0 12 12"><circle cx="6" cy="6" r="5.2" fill="none" stroke="#fff" stroke-width="1.05"/><path d="M2.9 6.6 L5.1 8.4 L8.9 3.7" fill="none" stroke="#fff" stroke-width="1.05"/></svg>
<div class="t" style="left:747.30px;top:399.00px;font-size:9.5px;color:#fff;transform:scaleX(0.9700);transform-origin:0.00px 0;-webkit-text-stroke:0.3px #fff;">Confirm</div>
<div class="r" style="left:849.3px;top:343.3px;width:96px;height:16.5px;background:#1a3ec6;border-radius:1.5px;box-shadow:0 0.5px 1px rgba(0,0,0,.35);"></div>
<svg class="r" style="left:851.5px;top:345.6px;" width="12" height="12" viewBox="0 0 12 12"><circle cx="6.0" cy="6.0" r="5.3" fill="none" stroke="#fff" stroke-width="1.0"/><path d="M6.0 2.81 V9.190000000000001 M2.81 6.0 H9.190000000000001" stroke="#fff" stroke-width="1.0"/></svg>
<div class="t" style="left:868.50px;top:347.00px;font-size:9.5px;color:#fff;transform:scaleX(0.9637);transform-origin:0.00px 0;-webkit-text-stroke:0.3px #fff;">Add section</div>
<div class="t" style="left:130.00px;top:494.00px;font-size:11px;color:#333;font-weight:bold;transform:scaleX(0.9642);transform-origin:0.00px 0;">OPENING HOURS EXCEPTIONS</div>
<div class="r" style="left:128px;top:515px;width:824.5px;height:194px;background:transparent;border-radius:7px;border:2px solid #f0a2a7;box-sizing:border-box;"></div>
<div class="t" style="left:142.20px;top:529.00px;font-size:11px;color:#222;font-weight:bold;transform:scaleX(0.9558);transform-origin:0.00px 0;">Exception details</div>
<div class="t" style="left:146.50px;top:550.00px;font-size:9px;color:#222;">Exception reason</div>
<div class="t" style="left:219.90px;top:550.00px;font-size:9px;color:#e1000f;font-weight:bold;">*</div>
<div class="r" style="left:142px;top:561px;width:63.5px;height:24.5px;background:#f3f3f3;border-radius:3px;"></div>
<svg class="r" style="left:145.5px;top:569px;" width="17.5" height="10" viewBox="0 0 17.5 10"><rect width="17.5" height="10" fill="#1f2a7a"/><path d="M0 0 L17.5 10 M17.5 0 L0 10" stroke="#fff" stroke-width="2.2"/><path d="M0 0 L17.5 10 M17.5 0 L0 10" stroke="#d0203a" stroke-width="0.8"/><path d="M8.75 0 V10 M0 5 H17.5" stroke="#fff" stroke-width="3.2"/><path d="M8.75 0 V10 M0 5 H17.5" stroke="#d0203a" stroke-width="1.8"/></svg>
<div class="t" style="left:167.80px;top:567.00px;font-size:11px;color:#222;">en</div>
<div class="r" style="left:210px;top:561px;width:298px;height:24.5px;background:#f3f3f3;border-radius:3px;"></div>
<div class="t" style="left:215.80px;top:568.00px;font-size:11px;color:#222;transform:scaleX(0.9662);transform-origin:0.00px 0;">Company event</div>
<div class="r" style="left:515px;top:561.2px;width:24px;height:23.5px;background:#1a3ec6;border-radius:3px;"></div>
<svg class="r" style="left:519px;top:566px;" width="17" height="14" viewBox="0 0 17 14"><rect x="0.5" y="0.6" width="15.4" height="12.4" rx="1" fill="#fff"/><rect x="8" y="7.8" width="6.6" height="3.9" fill="#1a3ec6"/></svg>
<div class="r" style="left:543px;top:561.2px;width:24px;height:23.5px;background:#1a3ec6;border-radius:3px;"></div>
<svg class="r" style="left:546px;top:565px;" width="19" height="17" viewBox="0 0 19 17"><path d="M1 2.6 H13 M7 0.2 V2.6" stroke="#fff" stroke-width="1.5" fill="none"/><path d="M11.7 3.2 Q9.5 9.2 2.6 12.6" stroke="#fff" stroke-width="1.5" fill="none"/><path d="M4.6 5.8 L9.6 10.7" stroke="#fff" stroke-width="1.5" fill="none"/><path d="M9.8 15.6 L13.2 6.9 L17.3 15.6 M11 12.2 H15.6" stroke="#fff" stroke-width="1.5" fill="none"/></svg>
<svg class="r" style="left:140.5px;top:595.5px;" width="13" height="13" viewBox="0 0 13 13"><circle cx="6.5" cy="6.5" r="5.6" fill="#fff" stroke="#999" stroke-width="1"/><circle cx="6.5" cy="6.5" r="3" fill="#e1000f"/></svg>
<div class="t" style="left:159.70px;top:597.00px;font-size:11px;color:#222;transform:scaleX(0.9631);transform-origin:0.00px 0;">Closing exception</div>
<svg class="r" style="left:140.5px;top:616.5px;" width="13" height="13" viewBox="0 0 13 13"><circle cx="6.5" cy="6.5" r="5.6" fill="#fff" stroke="#999" stroke-width="1"/></svg>
<div class="t" style="left:160.00px;top:618.00px;font-size:11px;color:#222;transform:scaleX(0.9509);transform-origin:0.00px 0;">Opening exception</div>
<div class="t" style="left:141.75px;top:649.00px;font-size:11px;color:#222;transform:scaleX(0.9497);transform-origin:0.00px 0;">Start date</div>
<div class="t" style="left:191.30px;top:649.00px;font-size:11px;color:#e1000f;font-weight:bold;">*</div>
<div class="r" style="left:202px;top:643.3px;width:96.3px;height:23.7px;background:#f3f3f3;border-radius:3px;"></div>
<div class="t" style="left:207.50px;top:649.00px;font-size:11px;color:#222;transform:scaleX(0.9552);transform-origin:0.00px 0;">21.04.2024.</div>
<svg class="r" style="left:278.7px;top:648px;" width="13" height="14" viewBox="0 0 13 14"><rect x="0.8" y="2.1" width="10.4" height="9.9" rx="1.2" fill="#fff" stroke="#e1000f" stroke-width="1.5"/><rect x="0.8" y="2.1" width="10.4" height="3.6" rx="1" fill="#e1000f"/><rect x="2.4" y="0.5" width="1.6" height="3" rx="0.5" fill="#e1000f"/><rect x="8" y="0.5" width="1.6" height="3" rx="0.5" fill="#e1000f"/><g fill="#e1000f"><rect x="2.3" y="6.5" width="1.6" height="1.5"/><rect x="5.2" y="6.5" width="1.6" height="1.5"/><rect x="8.1" y="6.5" width="1.6" height="1.5"/><rect x="2.3" y="9" width="1.6" height="1.5"/><rect x="5.2" y="9" width="1.6" height="1.5"/><rect x="8.1" y="9" width="1.6" height="1.5"/></g></svg>
<div class="r" style="left:308.3px;top:650px;width:11px;height:11px;background:#fff;border-radius:2px;border:1px solid #aaa;box-sizing:border-box;"></div>
<div class="t" style="left:326.80px;top:650.00px;font-size:11px;color:#222;transform:scaleX(0.9556);transform-origin:0.00px 0;">All day event</div>
<div class="t" style="left:141.75px;top:679.00px;font-size:11px;color:#222;transform:scaleX(0.9618);transform-origin:0.00px 0;">Start time</div>
<div class="t" style="left:191.30px;top:679.00px;font-size:11px;color:#e1000f;font-weight:bold;">*</div>
<div class="r" style="left:202px;top:673px;width:81.3px;height:23.8px;background:#f3f3f3;border-radius:3px;"></div>
<div class="t" style="left:207.50px;top:679.00px;font-size:11px;color:#222;">10:00</div>
<div class="t" style="left:308.80px;top:678.00px;font-size:11px;color:#222;transform:scaleX(0.9147);transform-origin:0.00px 0;">End time</div>
<div class="t" style="left:352.50px;top:678.00px;font-size:11px;color:#e1000f;font-weight:bold;">*</div>
<div class="r" style="left:365px;top:673px;width:81.3px;height:23.8px;background:#f3f3f3;border-radius:3px;"></div>
<div class="t" style="left:371.30px;top:679.00px;font-size:11px;color:#222;">11:00</div>
<div class="r" style="left:754.3px;top:522.5px;width:189.7px;height:23.2px;background:#1a3ec6;border-radius:3px;"></div>
<svg class="r" style="left:758.8px;top:526.8px;" width="14.5" height="14.5" viewBox="0 0 14.5 14.5"><circle cx="7.25" cy="7.25" r="6.55" fill="none" stroke="#fff" stroke-width="1.2"/><path d="M7.25 3.335 V11.165000000000001 M3.335 7.25 H11.165000000000001" stroke="#fff" stroke-width="1.2"/></svg>
<div class="t" style="left:819.90px;top:529.00px;font-size:9.5px;color:#fff;transform:scaleX(0.9684);transform-origin:0.00px 0;-webkit-text-stroke:0.35px #fff;">Add exception</div>
<div class="r" style="left:599.4px;top:572.3px;width:23.5px;height:12.7px;background:#f0f0f0;border-radius:6.35px;"></div>
<div class="r" style="left:611px;top:573px;width:11.3px;height:11.3px;background:#e1000f;border-radius:5.65px;"></div>
<div class="t" style="left:636.00px;top:574.00px;font-size:11px;color:#222;transform:scaleX(0.9531);transform-origin:0.00px 0;">Is repeating event</div>
<div class="r" style="left:623.3px;top:590.1px;width:213.7px;height:24.4px;background:#f3f3f3;border-radius:3px;"></div>
<div class="t" style="left:628.60px;top:596.00px;font-size:11px;color:#222;transform:scaleX(0.9192);transform-origin:0.00px 0;">Weekly</div>
<svg class="r" style="left:817.6px;top:598.8px;" width="10" height="7" viewBox="0 0 10 7"><path d="M1.2 1.2 L5 5 L8.8 1.2" fill="none" stroke="#2d4654" stroke-width="1.5"/></svg>
<div class="t" style="left:623.70px;top:625.00px;font-size:11px;color:#222;transform:scaleX(0.8648);transform-origin:0.00px 0;">Every</div>
<div class="r" style="left:664.3px;top:618.2px;width:33.2px;height:24px;background:#f3f3f3;border-radius:3px;"></div>
<div class="t" style="left:687.20px;top:625.00px;font-size:11px;color:#222;">1</div>
<div class="t" style="left:702.10px;top:625.00px;font-size:11px;color:#222;transform:scaleX(0.9585);transform-origin:-0.10px 0;">week(s)</div>
<div class="r" style="left:623.3px;top:646.2px;width:39.6px;height:22.9px;background:#f21c1c;border-radius:3px;"></div>
<div class="t" style="left:632.65px;top:653.00px;font-size:9.5px;color:#fff;transform:scaleX(0.9414);transform-origin:0.00px 0;">MON</div>
<div class="r" style="left:667.2px;top:646.2px;width:39.6px;height:22.9px;background:#cacaca;border-radius:3px;"></div>
<div class="t" style="left:678.90px;top:653.00px;font-size:9.5px;color:#333;transform:scaleX(0.8526);transform-origin:0.00px 0;">TUE</div>
<div class="r" style="left:711.1px;top:646.2px;width:39.6px;height:22.9px;background:#cacaca;border-radius:3px;"></div>
<div class="t" style="left:721.65px;top:653.00px;font-size:9.5px;color:#333;transform:scaleX(0.8333);transform-origin:0.00px 0;">WED</div>
<div class="r" style="left:755px;top:646.2px;width:39.6px;height:22.9px;background:#cacaca;border-radius:3px;"></div>
<div class="t" style="left:766.00px;top:653.00px;font-size:9.5px;color:#333;transform:scaleX(0.9026);transform-origin:0.00px 0;">THU</div>
<div class="r" style="left:799px;top:646.2px;width:39.6px;height:22.9px;background:#cacaca;border-radius:3px;"></div>
<div class="t" style="left:812.40px;top:653.00px;font-size:9.5px;color:#333;transform:scaleX(0.8366);transform-origin:0.00px 0;">FRI</div>
<div class="r" style="left:843.2px;top:646.2px;width:39.6px;height:22.9px;background:#cacaca;border-radius:3px;"></div>
<div class="t" style="left:855.15px;top:653.00px;font-size:9.5px;color:#333;transform:scaleX(0.8820);transform-origin:0.00px 0;">SAT</div>
<div class="r" style="left:887.2px;top:646.2px;width:39.6px;height:22.9px;background:#cacaca;border-radius:3px;"></div>
<div class="t" style="left:898.10px;top:653.00px;font-size:9.5px;color:#333;transform:scaleX(0.8856);transform-origin:0.00px 0;">SUN</div>
<div class="t" style="left:623.70px;top:681.00px;font-size:10px;color:#222;transform:scaleX(0.8825);transform-origin:0.00px 0;">End date</div>
<div class="r" style="left:678.5px;top:674.4px;width:96px;height:24.4px;background:#f3f3f3;border-radius:3px;"></div>
<div class="t" style="left:683.80px;top:681.00px;font-size:11px;color:#222;transform:scaleX(0.9552);transform-origin:0.00px 0;">31.12.2024.</div>
<svg class="r" style="left:754.8px;top:679.3px;" width="13" height="14" viewBox="0 0 13 14"><rect x="0.8" y="2.1" width="10.4" height="9.9" rx="1.2" fill="#fff" stroke="#e1000f" stroke-width="1.5"/><rect x="0.8" y="2.1" width="10.4" height="3.6" rx="1" fill="#e1000f"/><rect x="2.4" y="0.5" width="1.6" height="3" rx="0.5" fill="#e1000f"/><rect x="8" y="0.5" width="1.6" height="3" rx="0.5" fill="#e1000f"/><g fill="#e1000f"><rect x="2.3" y="6.5" width="1.6" height="1.5"/><rect x="5.2" y="6.5" width="1.6" height="1.5"/><rect x="8.1" y="6.5" width="1.6" height="1.5"/><rect x="2.3" y="9" width="1.6" height="1.5"/><rect x="5.2" y="9" width="1.6" height="1.5"/><rect x="8.1" y="9" width="1.6" height="1.5"/></g></svg>
<div class="r" style="left:790.2px;top:681.2px;width:11.3px;height:11.3px;background:#fff;border-radius:2px;border:1px solid #aaa;box-sizing:border-box;"></div>
<div class="t" style="left:808.80px;top:681.00px;font-size:11px;color:#222;transform:scaleX(0.9604);transform-origin:0.00px 0;">Set as indefinite</div>
<div class="t" style="left:130.00px;top:722.00px;font-size:9.5px;color:#222;font-weight:bold;transform:scaleX(1.1149);transform-origin:0.00px 0;">Exceptions list</div>
<div class="r" style="left:129px;top:736.3px;width:821.5px;height:22px;background:#e6e6e6;border-radius:0px;"></div>
<div class="r" style="left:160px;top:736.3px;width:1px;height:22px;background:#ececec;border-radius:0px;"></div>
<div class="r" style="left:363px;top:736.3px;width:1px;height:22px;background:#ececec;border-radius:0px;"></div>
<div class="r" style="left:500px;top:736.3px;width:1px;height:22px;background:#ececec;border-radius:0px;"></div>
<div class="r" style="left:622px;top:736.3px;width:1px;height:22px;background:#ececec;border-radius:0px;"></div>
<div class="r" style="left:745px;top:736.3px;width:1px;height:22px;background:#ececec;border-radius:0px;"></div>
<div class="r" style="left:868px;top:736.3px;width:1px;height:22px;background:#ececec;border-radius:0px;"></div>
<div class="t" style="left:162.70px;top:741.00px;font-size:11px;color:#222;font-weight:bold;transform:scaleX(0.9651);transform-origin:0.00px 0;">Exception reason</div>
<div class="t" style="left:366.60px;top:741.00px;font-size:11px;color:#222;font-weight:bold;transform:scaleX(0.9412);transform-origin:0.00px 0;">Date</div>
<div class="t" style="left:503.00px;top:741.00px;font-size:11px;color:#222;font-weight:bold;transform:scaleX(0.9529);transform-origin:0.00px 0;">Time</div>
<div class="t" style="left:625.90px;top:741.00px;font-size:11px;color:#222;font-weight:bold;transform:scaleX(0.9629);transform-origin:0.00px 0;">Exception type</div>
<div class="t" style="left:748.40px;top:741.00px;font-size:11px;color:#222;font-weight:bold;transform:scaleX(0.9624);transform-origin:0.00px 0;">Repeating</div>
<div class="t" style="left:871.20px;top:741.00px;font-size:11px;color:#222;font-weight:bold;transform:scaleX(0.9569);transform-origin:0.00px 0;">End date</div>
<svg class="r" style="left:139.3px;top:764px;" width="12" height="15" viewBox="0 0 12 15"><path d="M1.1 1.3 H11.2" stroke="#1a3ec6" stroke-width="1.4" stroke-linecap="round"/><path d="M4.1 0.5 Q6.1 -0.3 8.1 0.5" stroke="#1a3ec6" stroke-width="1.1" fill="none"/><rect x="1.0" y="2.8" width="10" height="11" rx="1.6" fill="#1a3ec6"/><path d="M3.9 6.3 L8.1 10.6 M8.1 6.3 L3.9 10.6" stroke="#fff" stroke-width="1.5"/></svg>
<div class="t" style="left:162.70px;top:763.00px;font-size:11px;color:#222;transform:scaleX(0.9662);transform-origin:0.00px 0;">Company event</div>
<div class="t" style="left:366.60px;top:763.00px;font-size:11px;color:#222;transform:scaleX(0.9528);transform-origin:0.00px 0;">14.05.2024</div>
<div class="t" style="left:503.00px;top:763.00px;font-size:11px;color:#222;transform:scaleX(0.9636);transform-origin:0.00px 0;">All day</div>
<div class="t" style="left:625.90px;top:763.00px;font-size:11px;color:#222;transform:scaleX(0.9564);transform-origin:0.00px 0;">Closing</div>
<div class="t" style="left:749.00px;top:763.00px;font-size:11px;color:#222;">-</div>
<div class="t" style="left:871.80px;top:763.00px;font-size:11px;color:#222;">-</div>
<div class="t" style="left:1053.20px;top:24.00px;font-size:22px;color:#2a2a2a;transform:scaleX(0.9494);transform-origin:0.00px 0;">Point of service (POS)</div>
<div class="t" style="left:1056.00px;top:76.00px;font-size:11px;color:#999;transform:scaleX(0.9086);transform-origin:0.00px 0;">POS name:</div>
<div class="t" style="left:1184.00px;top:76.00px;font-size:11px;color:#333;font-weight:bold;transform:scaleX(0.9011);transform-origin:0.00px 0;">Berlin 18</div>
<div class="t" style="left:1056.00px;top:99.00px;font-size:11px;color:#999;transform:scaleX(0.9234);transform-origin:0.00px 0;">POS number:</div>
<div class="t" style="left:1184.00px;top:99.00px;font-size:11px;color:#333;font-weight:bold;transform:scaleX(0.8900);transform-origin:0.00px 0;">BER-18</div>
<div class="r" style="left:1046.5px;top:563px;width:223px;height:34px;background:#e1000f;border-radius:3px;"></div>
<div class="r" style="left:1046.5px;top:602px;width:223px;height:34px;background:#e1000f;border-radius:3px;"></div>
<div class="r" style="left:1046.5px;top:641px;width:223px;height:34px;background:#595959;border-radius:3px;"></div>
<div class="t" style="left:1129.00px;top:575.00px;font-size:10px;color:#fff;transform:scaleX(0.9054);transform-origin:0.00px 0;-webkit-text-stroke:0.3px #fff;">Save changes</div>
<div class="t" style="left:1102.90px;top:614.00px;font-size:10px;color:#fff;transform:scaleX(0.9172);transform-origin:0.00px 0;-webkit-text-stroke:0.3px #fff;">Save and back to overview</div>
<div class="t" style="left:1099.00px;top:653.00px;font-size:10px;color:#fff;transform:scaleX(0.9218);transform-origin:0.00px 0;-webkit-text-stroke:0.3px #fff;">Cancel and back to overview</div>
<svg class="r" style="left:6px;top:9px;" width="40" height="36" viewBox="0 0 40 36"><defs><linearGradient id="lg" gradientUnits="userSpaceOnUse" x1="12" y1="34" x2="39.8" y2="21.9"><stop offset="0" stop-color="#98006a"/><stop offset="0.57" stop-color="#c81e7a"/><stop offset="0.575" stop-color="#d6476e"/><stop offset="1" stop-color="#fbab14"/></linearGradient></defs><path d="M1.3 8 Q0.8 6 2.6 5.1 L9.5 1.6 Q16 -1 18.6 4.4 L20.5 9 L11.6 30.2 Z" fill="#3fe9ad"/><path d="M11.9 21.2 A13.5 13.4 0 0 1 39 21.2 A13.5 13.4 0 0 1 25.4 34.6 H14.2 Q11.9 34.6 11.9 32.3 Z" fill="url(#lg)"/></svg>
<svg class="r" style="left:17px;top:62px;" width="19" height="17" viewBox="0 0 19 17"><rect x="1.1" y="0.8" width="16.2" height="11.4" rx="1.5" fill="none" stroke="#fff" stroke-width="1.8"/><path d="M7.6 12.5 H11 V13.8 H11.8 V15.9 H6.8 V13.8 H7.6 Z" fill="#fff"/></svg>
<svg class="r" style="left:14px;top:101px;" width="24" height="26" viewBox="0 0 24 26"><path d="M1.2 3.2 Q3.5 2.8 4.3 5 L7 12.6 H17.5 L22 5.5" fill="none" stroke="#fff" stroke-width="1.9" stroke-linecap="round" stroke-linejoin="round"/><path d="M7 12.6 Q5.3 14.5 6 16.5 Q6.5 17.5 8 17.5 H20.5" fill="none" stroke="#fff" stroke-width="1.9" stroke-linecap="round"/><circle cx="7.2" cy="22.4" r="2" fill="#fff"/><circle cx="18.3" cy="22.4" r="2" fill="#fff"/><path d="M12.7 1.3 V9.7 M8.5 5.5 H16.9" stroke="#fff" stroke-width="1.9" stroke-linecap="round"/></svg>
<svg class="r" style="left:16px;top:142px;" width="23" height="24" viewBox="0 0 23 24"><rect x="1.95" y="3.75" width="17.7" height="17.7" rx="1.2" fill="none" stroke="#fff" stroke-width="1.9"/><path d="M7.6 3.9 L9.6 1.6 Q10.8 0.4 12 1.6 L14 3.9 Z" fill="#fff"/><circle cx="10.8" cy="2.6" r="0.65" fill="#e1000f"/><path d="M5.4 13.2 L10.8 7.4 V10.9 H15.4 V15.5 H10.8 V19 Z" fill="#fff"/></svg>
<svg class="r" style="left:18px;top:596px;" width="16" height="16" viewBox="0 0 16 16"><circle cx="5" cy="2.3" r="2" fill="#e1000f"/><circle cx="10.8" cy="2.3" r="2" fill="#e1000f"/><path d="M0.8 10.1 V8.6 Q0.8 5.6 5 5.6 Q9.5 5.6 9.5 8.6 V10.1 Z" fill="#e1000f"/><path d="M10.1 5.6 Q15.2 5.6 15.2 8.8 V10.1 H10.3 V7.5 Z" fill="#e1000f"/><path d="M4.3 13.6 H11.6" stroke="#e1000f" stroke-width="1.2"/><path d="M3.6 13.6 L5.6 12 V15.2 Z M12.3 13.6 L10.3 12 V15.2 Z" fill="#e1000f"/></svg>
<div class="t" style="left:20.20px;top:623.00px;font-size:9.5px;color:#fff;transform:scaleX(0.9545);transform-origin:0.00px 0;">EN</div>
<svg class="r" style="left:17px;top:646px;" width="18" height="20" viewBox="0 0 18 20"><rect width="18" height="20" fill="#fff"/><path d="M9 3.5 Q13 3.5 12.8 8 Q12.6 11.5 10.8 12.5 L11 13.8 Q16.5 15 17 20 H1 Q1.5 15 7 13.8 L7.2 12.5 Q5.4 11.5 5.2 8 Q5 3.5 9 3.5 Z" fill="#555"/></svg>
<svg class="r" style="left:18px;top:677px;" width="16" height="17" viewBox="0 0 16 17"><path d="M7.6 14.3 A6.3 6.3 0 1 1 10.6 13.4 L7.4 15.6" fill="none" stroke="#fff" stroke-width="1.2"/><path d="M5.6 5.6 Q5.6 3.3 7.7 3.3 Q9.9 3.3 9.9 5.3 Q9.9 6.6 8.5 7.4 Q7.7 7.9 7.7 9.2" fill="none" stroke="#fff" stroke-width="1.2"/><circle cx="7.7" cy="10.9" r="0.75" fill="#fff"/></svg>
<svg class="r" style="left:11px;top:701px;" width="30" height="11" viewBox="0 0 30 11"><rect x="0" y="0" width="2.7" height="9" fill="#fff"/><rect x="0" y="2.7" width="6.9" height="6.3" fill="#fff"/><rect x="9.1" y="4.9" width="2.2" height="2.2" fill="#fff"/><rect x="13.8" y="2.1" width="6.1" height="6.9" fill="#fff"/><rect x="22.1" y="2.1" width="6.9" height="6.9" fill="#fff"/><rect x="22.1" y="8" width="3" height="2.7" fill="#fff"/></svg>
</body></html>
